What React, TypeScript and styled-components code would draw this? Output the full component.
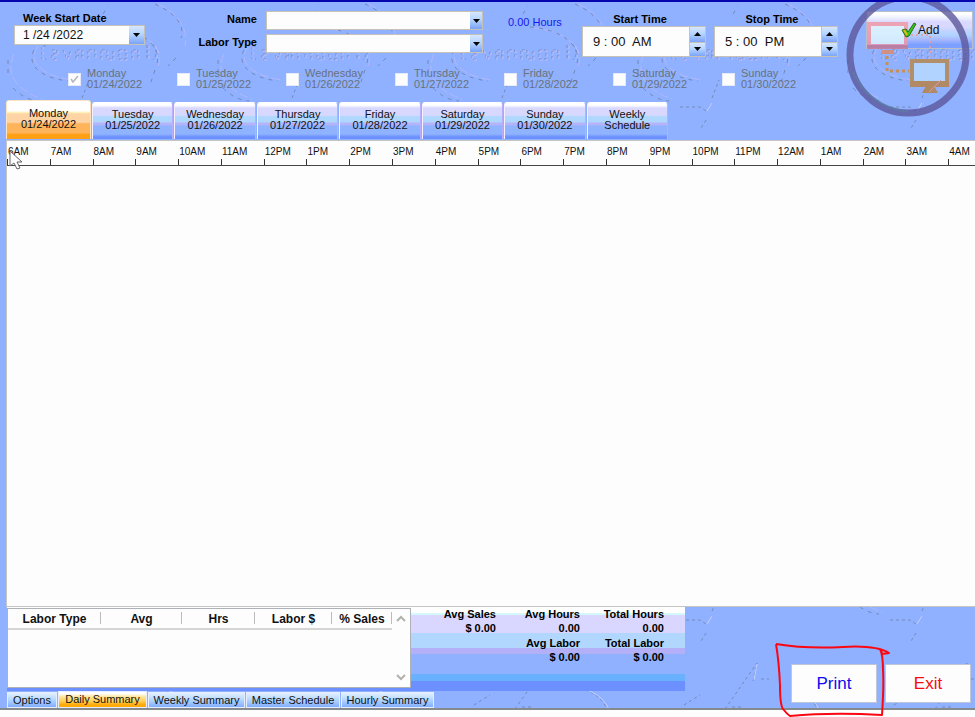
import React from "react";
import styled, { createGlobalStyle } from "styled-components";

const GlobalStyle = createGlobalStyle`
  * { box-sizing: border-box; }
  body { margin: 0; font-family: "Liberation Sans", Arial, sans-serif; font-size: 11px; color: #111; background: #fdfdfe; }
  button, input, select { font: inherit; color: inherit; border-radius: 0; }
`;

const Screen = styled.main`
  position: relative;
  display: flex;
  flex-direction: column;
  min-height: 100vh;
  overflow: hidden;
  background: #8fb1ff;
  border-top: 2px solid #0505ae;
`;
const Watermark = styled.svg`
  position: absolute;
  inset: 0;
  width: 100%;
  height: 100%;
`;
const Header = styled.header`
  position: relative;
  display: flex;
  align-items: flex-start;
  height: 62px;
  padding-left: 14px;
`;
const FieldLabel = styled.label`
  display: block;
  font-weight: bold;
  line-height: 14px;
  color: #000;
  white-space: nowrap;
`;
const DateField = styled.div`
  width: 131px;
  padding-top: 9px;
  > label { padding-left: 9px; }
`;
const Box = styled.div<{ $h: number }>`
  display: flex;
  height: ${(p) => p.$h}px;
  border: 1px solid #c5c3b8;
  background: #fdfdfe;
`;
const TextInput = styled.input<{ $size: number; $pad: number }>`
  flex: 1;
  min-width: 0;
  border: 0;
  padding: 0 0 0 ${(p) => p.$pad}px;
  background: transparent;
  font-size: ${(p) => p.$size}px;
  white-space: pre;
`;
const DropButton = styled.button<{ $w: number }>`
  display: grid;
  place-items: center;
  width: ${(p) => p.$w}px;
  padding: 0;
  border: 0;
  background: linear-gradient(#d6e6ff, #b5d5ff 45%, #7ba3f9);
`;
const Combos = styled.div`
  display: grid;
  grid-template-columns: 61px 217px;
  column-gap: 9px;
  row-gap: 4px;
  margin-left: 51px;
  padding-top: 9px;
  > label { text-align: right; line-height: 17px; }
`;
const Select = styled.select`
  appearance: none;
  flex: 1;
  min-width: 0;
  border: 0;
  background: transparent;
`;
const Hours = styled.output`
  margin-left: 25px;
  padding-top: 13px;
  width: 74px;
  line-height: 14px;
  color: #1717ee;
`;
const TimeField = styled.div`
  width: 124px;
  margin-right: 8px;
  padding-top: 10px;
  > label { text-align: center; padding-right: 8px; }
`;
const Spinner = styled.div`
  display: grid;
  grid-template-rows: 1fr 1fr;
  width: 16px;
  > button { width: 16px; border-left: 1px solid #c5c3b8; }
  > button + button { border-top: 1px solid #c5c3b8; }
`;
const AddButton = styled.button`
  display: flex;
  align-items: center;
  gap: 1px;
  flex: 1;
  min-width: 100px;
  height: 38px;
  margin: 9px 2px 0 20px;
  padding: 0 0 0 34px;
  border: 1px solid #b9bfc8;
  background: linear-gradient(#fff 0 6%, #f0f3ff 14%, #d9d8ff 28% 42%, #c3d3ff 52%, #b1d3ff 64%, #a9b9fd 76%, #7da0ff 90%);
  font-size: 12px;
  > svg { position: relative; z-index: 1; }
`;
const Emblem = styled.svg`
  position: absolute;
  right: 0;
  top: 0;
  width: 130px;
  height: 118px;
  pointer-events: none;
`;
const Days = styled.div`
  position: relative;
  display: flex;
  height: 36px;
  padding: 4px 0 0 68px;
`;
const Day = styled.label`
  display: flex;
  align-items: flex-start;
  gap: 6px;
  width: 109px;
  line-height: 11px;
  color: #68717d;
`;
const Tick = styled.input`
  appearance: none;
  width: 13px;
  height: 13px;
  margin: 5px 0 0;
  background: #fdfdfe;
  border: 1px solid #e6e9f6;
  &:checked {
    background: #fdfdfe url("data:image/svg+xml,%3Csvg xmlns='http://www.w3.org/2000/svg' viewBox='0 0 11 11'%3E%3Cpath d='M2 5l2 3 5-6' fill='none' stroke='%23b5b5ba' stroke-width='1.5'/%3E%3C/svg%3E");
  }
`;
const Tabs = styled.nav`
  position: relative;
  display: grid;
  grid-template-columns: 85px repeat(7, 1fr);
  align-items: end;
  gap: 1px;
  width: 662px;
  height: 40px;
  margin-left: 6px;
  padding-bottom: 1px;
`;
const Tab = styled.button<{ $on?: boolean }>`
  height: ${(p) => (p.$on ? 39 : 37)}px;
  padding: 0 0 2px;
  border: solid;
  border-width: 1px 1px 0;
  border-color: ${(p) => (p.$on ? "#fbe4bf" : "#fff #b9adff #8d9cff #f4f0ff")};
  border-radius: 3px 3px 0 0;
  line-height: 11px;
  color: #111;
  background: ${(p) =>
    p.$on
      ? "linear-gradient(#fff 0 26%, #fff3bd 30%, #ffd4a4 34% 56%, #fdb45b 60% 84%, #ff9f13 88%)"
      : "linear-gradient(#fff 0 6%, #d8d8ff 14% 34%, #b0d8ff 38% 52%, #b5b4fa 56% 60%, #8fb3ff 64% 86%, #6d90ff 94%)"};
`;
const Board = styled.section`
  position: relative;
  display: flex;
  flex: 1;
  flex-direction: column;
  margin-left: 6px;
  border: solid #c5c6c4;
  border-width: 1px 0 1px 1px;
  background: #fdfdfe;
`;
const Ruler = styled.ol`
  display: grid;
  grid-template-columns: repeat(23, minmax(0, 1fr));
  height: 25px;
  margin: 0 -16px 0 0;
  padding: 0;
  list-style: none;
  border-bottom: 1px solid #444;
`;
const Hour = styled.li`
  padding: 4px 0 0 1px;
  line-height: 13px;
  font-size: 10px;
  color: #111;
  background: linear-gradient(#333, #333) left bottom / 1px 6px no-repeat;
`;
const Pointer = styled.svg`
  position: absolute;
  left: 2px;
  top: 9px;
  width: 14px;
  height: 21px;
`;
const Footer = styled.footer`
  position: relative;
  display: flex;
  height: 103px;
  padding-left: 7px;
  border-bottom: 2px solid #858b8d;
`;
const Left = styled.div`
  width: 679px;
`;
const Summary = styled.div`
  display: flex;
  height: 84px;
  border-right: 1px solid #a5afc9;
  background: linear-gradient(#fff 0 6px, #d5f8fb 6px 8px, #d9d6ff 8px 26px, #b1d7ff 26px 41px, #b3b0f8 41px 47px, #8fb1ff 47px 67px, #69b0ff 67px 74px, #6c90ff 74px);
`;
const List = styled.div`
  display: flex;
  width: 404px;
  height: 80px;
  margin-top: 1px;
  border: 1px solid #aeb1b6;
  background: #fdfdfe;
`;
const Grid = styled.table`
  width: 384px;
  height: 20px;
  border-collapse: collapse;
  table-layout: fixed;
`;
const Head = styled.th<{ $w: number }>`
  width: ${(p) => p.$w}px;
  height: 20px;
  padding: 1px 0 0;
  border-bottom: 2px solid #d5d5d5;
  background: linear-gradient(#bbb, #bbb) right 3px / 1px 12px no-repeat;
  font-size: 12px;
`;
const Scroll = styled.div`
  display: flex;
  flex: 1;
  flex-direction: column;
  align-items: center;
  justify-content: space-between;
  padding: 6px 0;
`;
const Totals = styled.dl`
  display: grid;
  grid-template-columns: 85px 84px 84px;
  align-content: start;
  margin: 0;
  text-align: right;
  font-weight: bold;
  color: #000;
  dt, dd { margin: 0; }
`;
const Total = styled.div`
  line-height: 14px;
  padding-bottom: 1px;
`;
const BottomTabs = styled.nav`
  display: flex;
  align-items: flex-end;
  gap: 1px;
  height: 17px;
`;
const BottomTab = styled.button<{ $w: number; $on?: boolean }>`
  width: ${(p) => p.$w}px;
  height: ${(p) => (p.$on ? 17 : 16)}px;
  padding: 0;
  border: 1px solid #e5edff;
  white-space: nowrap;
  line-height: 13px;
  background: ${(p) => (p.$on ? "linear-gradient(#fff 10%, #ffe28d 35%, #ffd05c 60%, #ffab09 85%)" : "linear-gradient(#e3f0ff, #b6d9ff 45%, #82aeff)")};
`;
const Actions = styled.div`
  display: flex;
  flex: 1;
  justify-content: flex-end;
  align-items: flex-end;
  gap: 8px;
  padding: 0 4px 5px 0;
`;
const Action = styled.button<{ $color: string }>`
  width: 86px;
  height: 39px;
  border: 1px solid #bfc6d9;
  background: #fdfdfe;
  color: ${(p) => p.$color};
  font-size: 17px;
`;
const Marker = styled.svg`
  position: absolute;
  right: 81px;
  bottom: 0;
  width: 120px;
  height: 77px;
  pointer-events: none;
`;
const Base = styled.div`
  position: relative;
  height: 7px;
  background: #fdfdfe;
`;

const Arrow = ({ up = false }: { up?: boolean }) => (
  <svg width="7" height="4" viewBox="0 0 14 8" aria-hidden="true">
    <path d={up ? "M0 8h14L7 0z" : "M0 0h14L7 8z"} fill="#050505" />
  </svg>
);
const Chevron = ({ up = false }: { up?: boolean }) => (
  <svg width="10" height="7" viewBox="0 0 10 7" aria-hidden="true">
    <path d={up ? "M1 6l4-4 4 4" : "M1 1l4 4 4-4"} fill="none" stroke="#b2b2ab" strokeWidth="2" />
  </svg>
);

const days = ["Monday", "Tuesday", "Wednesday", "Thursday", "Friday", "Saturday", "Sunday"].map((name, i) => ({
  name,
  date: `01/${24 + i}/2022`,
}));
const hours = Array.from({ length: 23 }, (_, i) => {
  const h = (i + 6) % 24;
  return `${h % 12 || 12}${h < 12 ? "AM" : "PM"}`;
});

const Texture = () => (
  <Watermark aria-hidden="true">
    <defs>
      <pattern id="plate" width="210" height="513" patternUnits="userSpaceOnUse">
        <g fill="none">
          <path d="M14 52C5 72 16 88 42 97M38 44C26 62 45 74 72 78M112 26c32 2 54 20 46 38M158 2c22 10 30 26 27 42" stroke="#b4b5ff" strokeDasharray="9 3" />
          <path d="M8 58v16M13 86q12 12 26 13M34 48C26 64 42 76 68 79M110 25c30 2 52 18 47 36M155 2c22 10 30 22 26 34M176 56l-8 8M155 68l-4 12M103 12l5-8" stroke="#7288b4" strokeDasharray="4 5" />
          <path d="M50 105h20l6 4M82 96l7-18M76 118l-5 8M95 194l32-46-4 18M131 164h8M54 190l16-10M165 175q18 6 23 22M102 192h10" stroke="#7489b8" strokeDasharray="3 3" />
          <path d="M77 109l5-8M124 165l3-16M168 175q17 7 22 22" stroke="#c5ceff" />
          <g strokeDasharray="3 2" opacity=".85">
            <path d="M46 44h-4v13h4M52 48h5v4h-5v5h6M63 48l4 9 4-9M76 57v-9h6v9M76 53h6M88 57v-9h7v9M101 57v-9h6v9h6v-9M119 48h7v9h-7zM132 57v-9h6v9M147 43v14M153 43q6 7 0 15" stroke="#7186ae" />
            <path d="M43 45v13M53 49h5v4h-5v5h6M64 49l4 9 4-9M77 58v-9h6v9M89 58v-9h7v9M102 58v-9h6v9h6v-9M120 49h7v9h-7zM133 58v-9h6v9M149 44v14M155 44q6 7 0 15" stroke="#cdbfff" />
          </g>
        </g>
      </pattern>
    </defs>
    <rect width="100%" height="100%" fill="url(#plate)" />
  </Watermark>
);

const TimeBox = ({ id, label, value }: { id: string; label: string; value: string }) => (
  <TimeField>
    <FieldLabel htmlFor={id}>{label}</FieldLabel>
    <Box $h={31}>
      <TextInput id={id} $size={13} $pad={10} defaultValue={value} />
      <Spinner>
        <DropButton $w={16} aria-label={`${label} up`}><Arrow up /></DropButton>
        <DropButton $w={16} aria-label={`${label} down`}><Arrow /></DropButton>
      </Spinner>
    </Box>
  </TimeField>
);

const Combo = ({ id, label }: { id: string; label: string }) => (
  <>
    <FieldLabel htmlFor={id}>{label}</FieldLabel>
    <Box $h={19}>
      <Select id={id}><option value="" /></Select>
      <DropButton $w={12} tabIndex={-1} aria-label={`Open ${label}`}><Arrow /></DropButton>
    </Box>
  </>
);

export default function App() {
  return (
    <Screen>
      <GlobalStyle />
      <Texture />
      <Header>
        <DateField>
          <FieldLabel htmlFor="week">Week Start Date</FieldLabel>
          <Box $h={20}>
            <TextInput id="week" $size={12} $pad={8} defaultValue="1 /24 /2022" />
            <DropButton $w={15} aria-label="Open calendar"><Arrow /></DropButton>
          </Box>
        </DateField>
        <Combos>
          <Combo id="name" label="Name" />
          <Combo id="labor" label="Labor Type" />
        </Combos>
        <Hours>0.00 Hours</Hours>
        <TimeBox id="start" label="Start Time" value="9 : 00  AM" />
        <TimeBox id="stop" label="Stop Time" value="5 : 00  PM" />
        <AddButton>
          <svg width="16" height="16" viewBox="0 0 16 16" aria-hidden="true">
            <path d="M1 8l4-1 2 3 6-9 2 1-7 12-3 1z" fill="#37c51b" stroke="#286f12" />
            <path d="M3 8l3 5" stroke="#e9b321" strokeWidth="2" />
          </svg>
          Add
        </AddButton>
      </Header>
      <Days>
        {days.map((d, i) => (
          <Day key={d.name}>
            <Tick type="checkbox" defaultChecked={i === 0} disabled />
            <span>{d.name}<br />{d.date}</span>
          </Day>
        ))}
      </Days>
      <Emblem viewBox="0 0 130 118" aria-hidden="true">
        <circle cx="63" cy="53" r="58" fill="none" stroke="#5b579b" strokeWidth="7" opacity=".8" />
        <path d="M8 70q16 34 55 40" fill="none" stroke="#55869f" strokeWidth="2" opacity=".5" />
        <g fill="none" opacity=".85">
          <rect x="24" y="22" width="37" height="22" stroke="#f09aa8" strokeWidth="4" fill="#dcf4ff" />
          <path d="M22 45h41" stroke="#c37b98" strokeWidth="4" />
          <path d="M37 50h12" stroke="#e08b6b" strokeWidth="4" />
          <path d="M42 54v15h22" stroke="#d08b3b" strokeWidth="3" strokeDasharray="3 3" />
          <path d="M66 33h19v22" stroke="#ef9b9b" strokeWidth="2" strokeDasharray="2 3" />
          <rect x="67" y="59" width="35" height="22" stroke="#b78a4e" strokeWidth="4" fill="#b8daff" />
          <path d="M65 82h39" stroke="#b78349" strokeWidth="6" />
          <path d="M81 84h8l4 7h-16z" fill="#b78349" />
          <path d="M84 90l12-12" stroke="#e29999" strokeWidth="1" />
        </g>
      </Emblem>
      <Tabs>
        {days.map((d, i) => (
          <Tab key={d.name} $on={i === 0}>{d.name}<br />{d.date}</Tab>
        ))}
        <Tab>Weekly<br />Schedule</Tab>
      </Tabs>
      <Board>
        <Ruler>{hours.map((h) => <Hour key={h}>{h}</Hour>)}</Ruler>
        <Pointer viewBox="0 0 14 21" aria-hidden="true">
          <path d="M1 1v15l4-3 3 6 3-1-3-6h5z" fill="#fff" stroke="#666" />
        </Pointer>
      </Board>
      <Footer>
        <Left>
          <Summary>
            <List>
              <Grid>
                <thead>
                  <tr>
                    <Head $w={93}>Labor Type</Head>
                    <Head $w={81}>Avg</Head>
                    <Head $w={73}>Hrs</Head>
                    <Head $w={77}>Labor $</Head>
                    <Head $w={60}>% Sales</Head>
                  </tr>
                </thead>
              </Grid>
              <Scroll><Chevron up /><Chevron /></Scroll>
            </List>
            <Totals>
              <Total><dt>Avg Sales</dt><dd>$ 0.00</dd></Total>
              <Total><dt>Avg Hours</dt><dd>0.00</dd></Total>
              <Total><dt>Total Hours</dt><dd>0.00</dd></Total>
              <Total />
              <Total><dt>Avg Labor</dt><dd>$ 0.00</dd></Total>
              <Total><dt>Total Labor</dt><dd>$ 0.00</dd></Total>
            </Totals>
          </Summary>
          <BottomTabs>
            <BottomTab $w={50}>Options</BottomTab>
            <BottomTab $w={89} $on>Daily Summary</BottomTab>
            <BottomTab $w={97}>Weekly Summary</BottomTab>
            <BottomTab $w={94}>Master Schedule</BottomTab>
            <BottomTab $w={93}>Hourly Summary</BottomTab>
          </BottomTabs>
        </Left>
        <Actions>
          <Action $color="#0b0bf0">Print</Action>
          <Action $color="#f50b0b">Exit</Action>
        </Actions>
      </Footer>
      <Base />
      <Marker viewBox="0 0 120 77" aria-hidden="true">
        <path d="M2 4q30 5 67 3 33-2 46 6l-7 1M107 9l1 5M2 4q3 18 4 41 0 20 3 24 4 5 7 7 42-4 92-1 2-30 1-45 0-15-3-21" fill="none" stroke="#fb0712" strokeWidth="2" strokeLinejoin="round" />
      </Marker>
    </Screen>
  );
}
